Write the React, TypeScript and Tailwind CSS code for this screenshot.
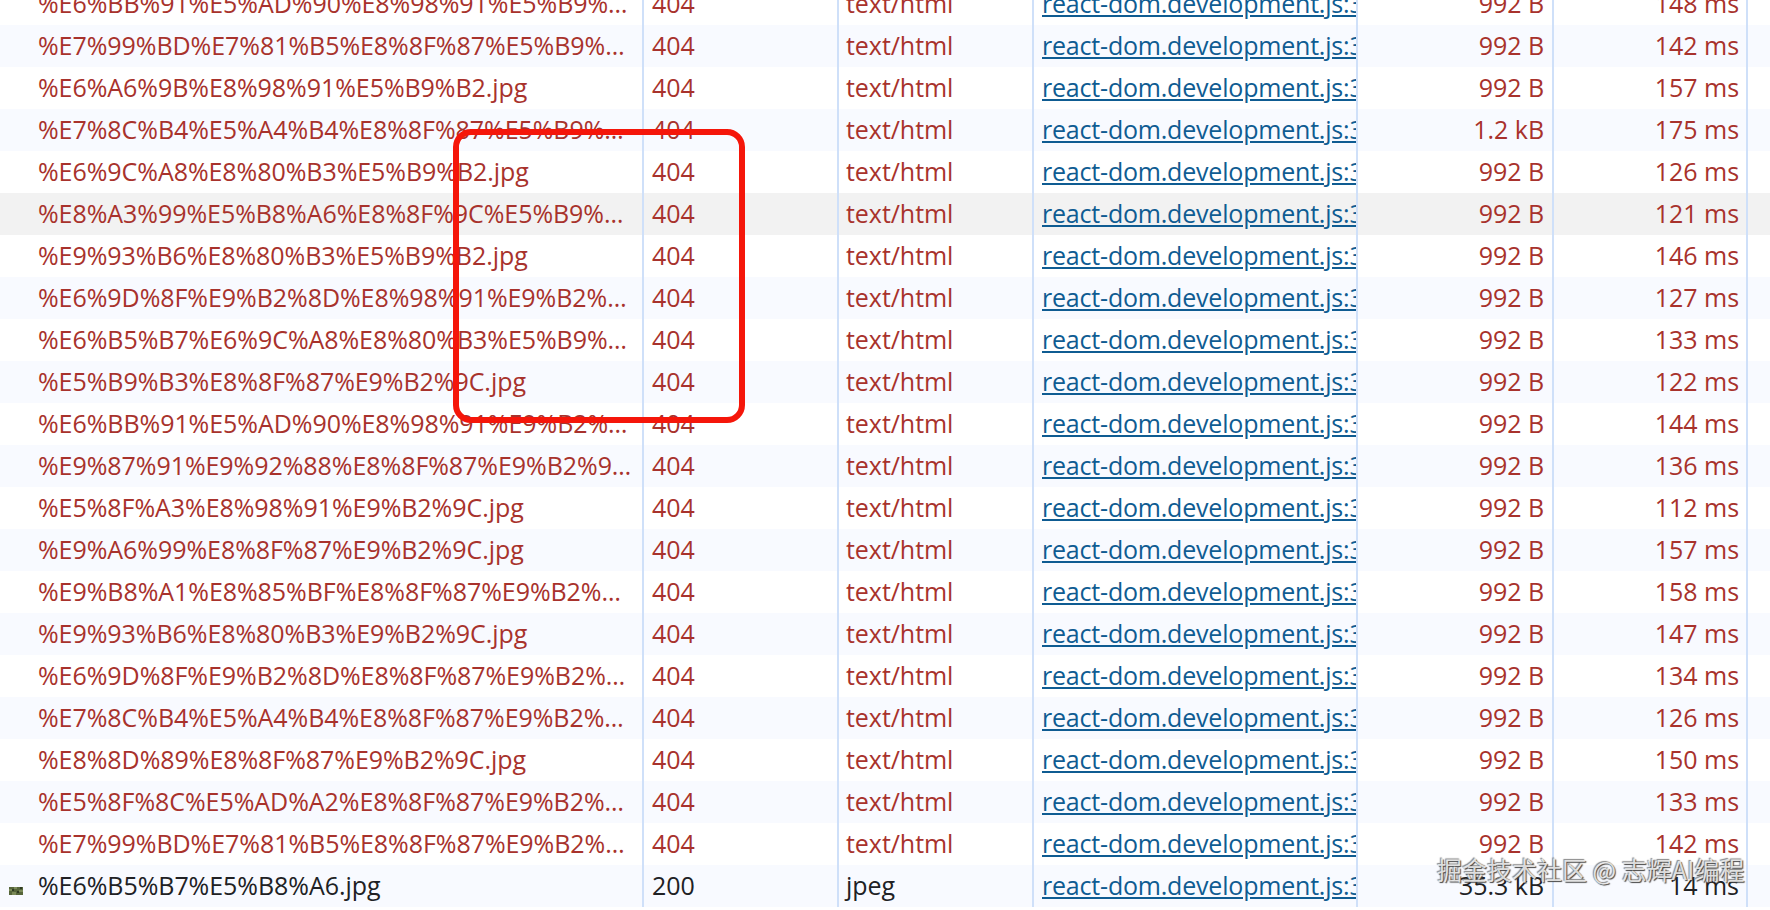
const rows = [
  { name: '%E6%BB%91%E5%AD%90%E8%98%91%E5%B9%…', size: '992 B', time: '148 ms' },
  { name: '%E7%99%BD%E7%81%B5%E8%8F%87%E5%B9%…', size: '992 B', time: '142 ms' },
  { name: '%E6%A6%9B%E8%98%91%E5%B9%B2.jpg', size: '992 B', time: '157 ms' },
  { name: '%E7%8C%B4%E5%A4%B4%E8%8F%87%E5%B9%…', size: '1.2 kB', time: '175 ms' },
  { name: '%E6%9C%A8%E8%80%B3%E5%B9%B2.jpg', size: '992 B', time: '126 ms' },
  { name: '%E8%A3%99%E5%B8%A6%E8%8F%9C%E5%B9%…', size: '992 B', time: '121 ms' },
  { name: '%E9%93%B6%E8%80%B3%E5%B9%B2.jpg', size: '992 B', time: '146 ms' },
  { name: '%E6%9D%8F%E9%B2%8D%E8%98%91%E9%B2%…', size: '992 B', time: '127 ms' },
  { name: '%E6%B5%B7%E6%9C%A8%E8%80%B3%E5%B9%…', size: '992 B', time: '133 ms' },
  { name: '%E5%B9%B3%E8%8F%87%E9%B2%9C.jpg', size: '992 B', time: '122 ms' },
  { name: '%E6%BB%91%E5%AD%90%E8%98%91%E9%B2%…', size: '992 B', time: '144 ms' },
  { name: '%E9%87%91%E9%92%88%E8%8F%87%E9%B2%9…', size: '992 B', time: '136 ms' },
  { name: '%E5%8F%A3%E8%98%91%E9%B2%9C.jpg', size: '992 B', time: '112 ms' },
  { name: '%E9%A6%99%E8%8F%87%E9%B2%9C.jpg', size: '992 B', time: '157 ms' },
  { name: '%E9%B8%A1%E8%85%BF%E8%8F%87%E9%B2%…', size: '992 B', time: '158 ms' },
  { name: '%E9%93%B6%E8%80%B3%E9%B2%9C.jpg', size: '992 B', time: '147 ms' },
  { name: '%E6%9D%8F%E9%B2%8D%E8%8F%87%E9%B2%…', size: '992 B', time: '134 ms' },
  { name: '%E7%8C%B4%E5%A4%B4%E8%8F%87%E9%B2%…', size: '992 B', time: '126 ms' },
  { name: '%E8%8D%89%E8%8F%87%E9%B2%9C.jpg', size: '992 B', time: '150 ms' },
  { name: '%E5%8F%8C%E5%AD%A2%E8%8F%87%E9%B2%…', size: '992 B', time: '133 ms' },
  { name: '%E7%99%BD%E7%81%B5%E8%8F%87%E9%B2%…', size: '992 B', time: '142 ms' },
  { name: '%E6%B5%B7%E5%B8%A6.jpg', size: '35.3 kB', time: '14 ms', ok: true },
]

function rowBg(i: number) {
  if (i === 5) return 'bg-[#f2f2f2]'
  return i % 2 === 1 ? 'bg-[#f8faff]' : 'bg-white'
}

function Thumb() {
  return (
    <svg className="absolute left-[9px] mt-[22px]" width="14" height="8" viewBox="0 0 14 8">
      <rect width="14" height="8" fill="#56653a" />
      <path d="M0 2h3v2H0zM5 0h3v2H5zM10 3h4v2h-4zM3 5h4v3H3z" fill="#7b8a58" />
      <path d="M3 2h2v2H3zM8 4h2v2H8zM11 0h2v2h-2z" fill="#2f3a22" />
    </svg>
  )
}

export default function App() {
  return (
    <div className="relative h-[910px] w-[1770px] overflow-hidden bg-white font-['Open_Sans','Liberation_Sans',sans-serif] text-[25px] tracking-[-0.05px]">
      {/* network table, first row is scrolled partly out of view */}
      <div className="-mt-[17px] flex flex-col">
        {rows.map((row, i) => (
          <div
            key={i}
            className={`grid h-[42px] grid-cols-[642px_195px_195px_324px_196px_194px_24px] items-stretch leading-[40px] ${rowBg(i)} ${row.ok ? 'text-[#202124]' : 'text-[#a8322c]'}`}
          >
            <div className="flex items-start overflow-hidden pl-[38px] whitespace-nowrap">
              {row.ok && <Thumb />}
              {row.name}
            </div>
            <div className="border-l-2 border-[#cfe0f9] pl-[8px]">{row.ok ? '200' : '404'}</div>
            <div className="border-l-2 border-[#cfe0f9] pl-[7px]">{row.ok ? 'jpeg' : 'text/html'}</div>
            <div className="overflow-hidden border-l-2 border-[#cfe0f9] pl-[8px] tracking-[-0.2px] whitespace-nowrap text-[#0f5c92] underline">
              react-dom.development.js:3
            </div>
            <div className="border-l-2 border-[#cfe0f9] pr-[8px] text-right">{row.size}</div>
            <div className="border-l-2 border-[#cfe0f9] pr-[7px] text-right">{row.time}</div>
            <div className="border-l-2 border-[#cfe0f9]" />
          </div>
        ))}
      </div>

      {/* annotation drawn over the screenshot */}
      <div className="absolute top-[129px] left-[453px] h-[294px] w-[292px] rounded-[18px] border-[6px] border-[#f5160a]" />

      {/* watermark */}
      <div className="absolute top-[851px] left-[1437px] font-['Noto_Sans_CJK_SC',sans-serif] text-[25px] tracking-normal whitespace-nowrap text-[#eeeeee]/90 [text-shadow:1px_1px_1px_#444,-1px_-1px_1px_#888]">
        掘金技术社区 @ 志辉AI编程
      </div>
    </div>
  )
}
